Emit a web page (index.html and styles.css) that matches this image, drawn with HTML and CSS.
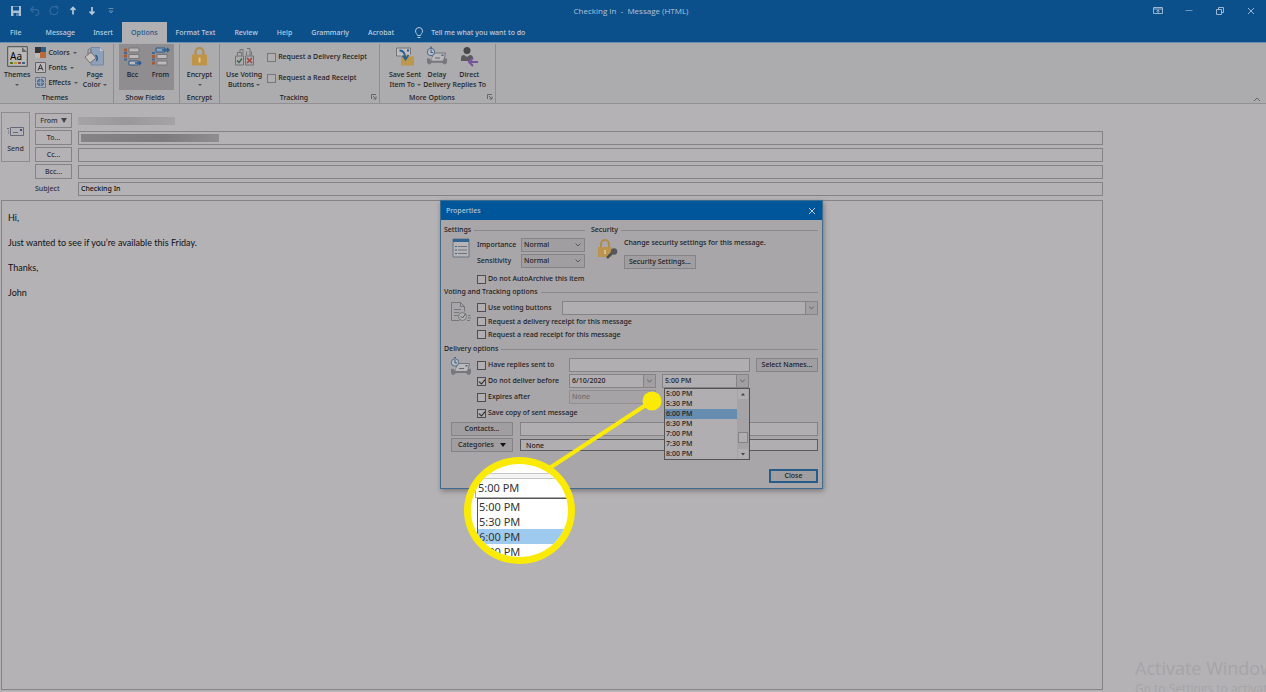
FILE: index.html
```html
<!DOCTYPE html>
<html lang="en">
<head>
<meta charset="utf-8">
<title>Checking In - Message (HTML)</title>
<link rel="stylesheet" href="styles.css">
</head>
<body>
<header class="titlebar">
  <div class="quick">
    <button aria-label="Save"><svg width="12" height="12" viewBox="0 0 12 12"><path d="M1 1h10v10H1z" fill="#a9c0d5"/><path d="M3 1.500h6v4H3zM3.500 8h5v3h-5z" fill="#0d4f8b"/><path d="M6.500 8.500h1V11h-1z" fill="#a9c0d5"/></svg></button>
    <button aria-label="Undo"><svg width="12" height="12" viewBox="0 0 12 12" fill="none" stroke="#2f689b" stroke-width="1.300"><path d="M4.500 1.500l-3 3 3 3M1.500 4.500h5c5 0 4 6 0 6"/></svg></button>
    <button aria-label="Redo"><svg width="12" height="12" viewBox="0 0 12 12" fill="none" stroke="#2f689b" stroke-width="1.300"><path d="M8.500 2.500A4 4 0 1 0 10 6M6.500 1.500h3v3"/></svg></button>
    <button aria-label="Previous item"><svg width="12" height="12" viewBox="0 0 12 12" fill="none" stroke="#b6c8da" stroke-width="1.700"><path d="M6 9.500V2.500M3.500 5L6 2.500 8.500 5"/></svg></button>
    <button aria-label="Next item"><svg width="12" height="12" viewBox="0 0 12 12" fill="none" stroke="#b6c8da" stroke-width="1.700"><path d="M6 2v7M3.500 6.500L6 9l2.500-2.500"/></svg></button>
    <button aria-label="Customize toolbar"><svg width="12" height="12" viewBox="0 0 12 12" fill="none" stroke="#5d88b0"><path d="M3.500 3.500h5M4 6l2 2 2-2z"/></svg></button>
  </div>
  <h1 class="title">Checking In&nbsp; - &nbsp;Message (HTML)</h1>
  <div class="window-buttons">
    <button aria-label="Ribbon display options"><svg width="10" height="10" viewBox="0 0 10 10" fill="none" stroke="#9db6cf"><path d="M.5 1.500h9v6h-9zM.5 3h9M5 7V4M3.500 5.500L5 4l1.500 1.500"/></svg></button>
    <button aria-label="Minimize"><svg width="10" height="10" viewBox="0 0 10 10" stroke="#6d93b8"><path d="M1.500 4.500h7"/></svg></button>
    <button aria-label="Restore"><svg width="10" height="10" viewBox="0 0 10 10" fill="none" stroke="#9db6cf"><path d="M1.500 3.500h5v5h-5zM3.500 3V1.500h5v5H7"/></svg></button>
    <button aria-label="Close window"><svg width="10" height="10" viewBox="0 0 10 10" stroke="#9db6cf"><path d="M2 2l6 6M8 2L2 8"/></svg></button>
  </div>
</header>
<nav class="tabs">
  <a href="#" class="file">File</a><a href="#">Message</a><a href="#">Insert</a><a href="#" class="active">Options</a><a href="#">Format Text</a><a href="#">Review</a><a href="#">Help</a><a href="#">Grammarly</a><a href="#">Acrobat</a>
  <a href="#" class="tell"><svg width="10" height="12" viewBox="0 0 10 12" fill="none" stroke="#b6c8da"><path d="M3.500 8.500C3.500 7 1.500 6.500 1.500 4a3.500 3.500 0 0 1 7 0c0 2.500-2 3-2 4.500zM3.500 10.500h3"/></svg>Tell me what you want to do</a>
</nav>

<section class="ribbon">
  <div class="group g-themes">
    <div class="tools">
      <button class="big"><svg width="21" height="21" viewBox="0 0 21 21"><path d="M.7.700h19.600v19.600H.700z" fill="#bab9b9" stroke="#4c4c4c"/><path d="M15 1v5h5z" fill="#686868"/><text x="3" y="14" class="aa">Aa</text><path d="M3 17h3" stroke="#58791e" stroke-width="2"/><path d="M7 17h3" stroke="#b69b40" stroke-width="2"/><path d="M11 17h3" stroke="#8c5045" stroke-width="2"/><path d="M15 17h3" stroke="#3f6188" stroke-width="2"/></svg><span>Themes</span><i class="arrow"></i></button>
      <div class="stack">
        <button><svg width="11" height="11" viewBox="0 0 11 11"><path d="M0 0h6v6H0z" fill="#343436"/><path d="M6 0h5v6H6z" fill="#286090"/><path d="M0 6h6v5H0z" fill="#bcb9b9"/><path d="M5 5h6v6H5z" fill="#bb693c"/></svg>Colors<i class="arrow"></i></button>
        <button><svg width="11" height="11" viewBox="0 0 11 11"><path d="M.5.500h10v10H.500z" fill="#bbb9bb" stroke="#666"/><path d="M3 8.500l2.500-6 2.500 6M4 6.500h3" fill="none" stroke="#333"/></svg>Fonts<i class="arrow"></i></button>
        <button><svg width="11" height="11" viewBox="0 0 11 11"><path d="M.5.500h10v10H.500z" fill="#a7abb5" stroke="#6c7890"/><circle cx="5.500" cy="5.500" r="3.200" fill="#69829f" stroke="#3f628b"/><path d="M5.500 0v11M0 5.500h11" stroke="#a6b1bf" stroke-width=".6"/></svg>Effects<i class="arrow"></i></button>
      </div>
      <button class="big"><svg width="21" height="21" viewBox="0 0 21 21"><path d="M7 1.500h9l3.500 3.500v14H7z" fill="#8fa0ba" stroke="#7388a6"/><path d="M16 1.500V5h3.500" fill="#c0c5ce"/><path d="M1 11l6-5 5 6-6 5z" fill="#c7c2bf" stroke="#77716f"/><path d="M4 9V4q2-3 3 0v4" fill="none" stroke="#777"/><path d="M11.500 9q3 2 1 6" fill="none" stroke="#295985" stroke-width="1.500"/></svg><span>Page<br>Color<i class="arrow"></i></span></button>
    </div>
    <div class="caption">Themes</div>
  </div>
  <div class="group g-fields">
    <div class="tools pressed">
      <button class="big"><svg width="21" height="20" viewBox="0 0 21 20"><path d="M7 1.500h10v4H7zM7 8h10v4H7z" fill="#bcbabc" stroke="#777"/><path d="M2 3.500h3M2 9.500h3" stroke="#a65a35" stroke-width="3"/><path d="M2 6.500h3M2 13h3" stroke="#426b94" stroke-width="2"/><path d="M7 14.500h9v4H7z" fill="#bcbabc" stroke="#295a91"/><path d="M13 16.500h6m-2-2l2 2-2 2" fill="none" stroke="#295a91" stroke-width="1.300"/></svg><span>Bcc</span></button>
      <button class="big"><svg width="21" height="20" viewBox="0 0 21 20"><path d="M7 8h10v4H7zM7 14.500h10v4H7z" fill="#bcbabc" stroke="#777"/><path d="M2 10h3M2 16.500h3" stroke="#a65a35" stroke-width="3"/><path d="M2 6.500h3M2 13h3" stroke="#426b94" stroke-width="2"/><path d="M6 1.500h9v4H6z" fill="#8fa4bb" stroke="#295a91"/><path d="M12 3.500h7m-2-2l2 2-2 2" fill="none" stroke="#295a91" stroke-width="1.300"/></svg><span>From</span></button>
    </div>
    <div class="caption">Show Fields</div>
  </div>
  <div class="group g-encrypt">
    <div class="tools">
      <button class="big"><svg width="17" height="20" viewBox="0 0 17 20"><path d="M4.500 9V5.500a4 4 0 0 1 8 0V9" fill="none" stroke="#b28c4c" stroke-width="2.200"/><rect x="1" y="8" width="15" height="11" rx="1" fill="#bf9448"/><path d="M8.500 11v5" stroke="#e0c489" stroke-width="2"/></svg><span>Encrypt</span><i class="arrow"></i></button>
    </div>
    <div class="caption">Encrypt</div>
  </div>
  <div class="group g-tracking">
    <div class="tools">
      <button class="big"><svg width="21" height="20" viewBox="0 0 21 20" fill="none"><path d="M1.500 9.500h8v9h-8zM11.500 9.500h8v9h-8zM3.500 9V6h4v3M6 6V3h3v6M12.500 9V5M13 2h3v7M17.500 5v4" stroke="#737173"/><path d="M3 14l2 2 3-4" stroke="#3b6345" stroke-width="1.300"/><path d="M13 11.500l5 5m0-5l-5 5" stroke="#a1493e" stroke-width="1.700"/></svg><span>Use Voting<br>Buttons<i class="arrow"></i></span></button>
      <div class="checks">
        <label><input type="checkbox">Request a Delivery Receipt</label>
        <label><input type="checkbox">Request a Read Receipt</label>
      </div>
    </div>
    <div class="caption">Tracking<svg class="launch" width="6" height="6" viewBox="0 0 6 6" fill="none" stroke="#666"><path d="M.5 5V.500H5M2 2l3 3M5 2.500V5H2.500"/></svg></div>
  </div>
  <div class="group g-more">
    <div class="tools">
      <button class="big"><svg width="20" height="20" viewBox="0 0 20 20"><path d="M6 10V8h6l1 2h6v9H6z" fill="#bc984f"/><path d="M6 9.500H1.500v-8h14V8" fill="#bebdc1" stroke="#747577"/><path d="M12 3h2v2h-2z" fill="#35547f"/><path d="M4.500 4q5.500 0 6 8M7.500 9l3 4 3-4.500" fill="none" stroke="#285f93" stroke-width="1.800"/></svg><span>Save Sent<br>Item To<i class="arrow"></i></span></button>
      <button class="big"><svg width="22" height="20" viewBox="0 0 22 20"><use href="#delay"/></svg><span>Delay<br>Delivery</span></button>
      <button class="big"><svg width="20" height="21" viewBox="0 0 20 21"><circle cx="8" cy="4.500" r="3.500" fill="#484648"/><path d="M2 15v-3q0-3 3-3l3 2 3-2q3 0 3 3l-4 3z" fill="#5b595b"/><path d="M19 16h-9m4-4l-4 4 4 4" fill="none" stroke="#77529a" stroke-width="2"/></svg><span>Direct<br>Replies To</span></button>
    </div>
    <div class="caption">More Options<svg class="launch" width="6" height="6" viewBox="0 0 6 6" fill="none" stroke="#666"><path d="M.5 5V.500H5M2 2l3 3M5 2.500V5H2.500"/></svg></div>
  </div>
  <button class="collapse" aria-label="Collapse ribbon"><svg width="8" height="6" viewBox="0 0 8 6" fill="none" stroke="#666"><path d="M1 5l3-3 3 3"/></svg></button>
</section>

<main class="message">
  <form class="headers">
    <button type="button" class="send"><svg width="19" height="11" viewBox="0 0 19 11" fill="none" stroke="#646a78"><path d="M4.500 1.500h13v8h-13zM1 2.500h2M2 5h1M2 7h1M7 6.500h5"/><path d="M14 3h2v2h-2z" fill="#35547f" stroke="none"/></svg>Send</button>
    <div class="rows">
      <div class="row"><button type="button">From <svg width="6" height="5" viewBox="0 0 6 5"><path d="M0 0h6L3 5z" fill="#444"/></svg></button><span class="blur short"></span></div>
      <div class="row"><button type="button">To...</button><div class="field"><span class="blur long"></span></div></div>
      <div class="row"><button type="button">Cc...</button><input class="field" aria-label="Cc"></div>
      <div class="row"><button type="button">Bcc...</button><input class="field" aria-label="Bcc"></div>
      <div class="row"><label for="subject">Subject</label><input class="field" id="subject" value="Checking In"></div>
    </div>
  </form>
  <article class="mail"><p>Hi,</p><p>Just wanted to see if you’re available this Friday.</p><p>Thanks,</p><p>John</p></article>
</main>

<div class="watermark"><div class="big-line">Activate Windows</div><div>Go to Settings to activate Windows.</div></div>

<section class="dialog" role="dialog" aria-labelledby="dlg-title">
  <header class="dlg-bar"><h2 id="dlg-title">Properties</h2><button aria-label="Close dialog"><svg width="8" height="8" viewBox="0 0 8 8" stroke="#bccbd9"><path d="M1 1l6 6M7 1L1 7"/></svg></button></header>
  <form class="dlg-body">
    <div class="top">
      <div class="settings">
        <h3>Settings</h3>
        <div class="pair">
          <svg width="18" height="20" viewBox="0 0 18 20"><path d="M1 1h16v18H1z" fill="#b5b4b7" stroke="#697582"/><path d="M1 1h16v3H1z" fill="#326492"/><path d="M3 8.500h2M3 12h2M3 15.500h2" stroke="#326492"/><path d="M6 8.500h9M6 12h9M6 15.500h9" stroke="#717277"/></svg>
          <div class="set-rows">
            <div class="set-row"><label for="imp">Importance</label><span class="combo gray"><select id="imp"><option>Normal</option></select><svg width="8" height="6" viewBox="0 0 8 6"><use href="#chev"/></svg></span></div>
            <div class="set-row"><label for="sens">Sensitivity</label><span class="combo gray"><select id="sens"><option>Normal</option></select><svg width="8" height="6" viewBox="0 0 8 6"><use href="#chev"/></svg></span></div>
            <label class="check archive"><input type="checkbox">Do not AutoArchive this item</label>
          </div>
        </div>
      </div>
      <div class="security">
        <h3>Security</h3>
        <div class="pair">
          <svg width="21" height="22" viewBox="0 0 21 22"><path d="M4 10V6a4 4 0 0 1 8 0v4" fill="none" stroke="#b08b4e" stroke-width="2"/><path d="M1 9h14v10H1z" fill="#bd944f"/><path d="M8 12v4" stroke="#d8bd8d" stroke-width="2"/><path d="M10 20l5-5" stroke="#4c4b50" stroke-width="2.500"/><circle cx="17" cy="13.500" r="3.200" fill="#57565b"/></svg>
          <div class="sec-text"><p>Change security settings for this message.</p><button type="button" class="btn">Security Settings...</button></div>
        </div>
      </div>
    </div>
    <h3>Voting and Tracking options</h3>
    <div class="pair voting">
      <svg width="21" height="22" viewBox="0 0 21 22" fill="none" stroke="#77777b"><path d="M1.500 1.500h9l4 4v5M1.500 1.500v18h8M10.500 1.500v4h4M4 8.500h7M4 11.500h5M4 14.500h4"/><circle cx="12.500" cy="15.500" r="4" fill="#b1b0b3"/><path d="M10.500 15l2 2 3-4" stroke="#506452"/><path d="M17 19.500h3M18 17h3M18 14.500h2.500"/></svg>
      <div class="vote-rows">
        <div class="vote-first"><label class="check"><input type="checkbox">Use voting buttons</label><span class="combo"><select aria-label="Voting buttons"><option></option></select><svg class="boxed" width="12" height="12" viewBox="-2 -3 12 12"><use href="#chev"/></svg></span></div>
        <label class="check"><input type="checkbox">Request a delivery receipt for this message</label>
        <label class="check"><input type="checkbox">Request a read receipt for this message</label>
      </div>
    </div>
    <h3>Delivery options</h3>
    <div class="pair delivery">
      <svg width="22" height="20" viewBox="0 0 22 20"><g id="delay"><path d="M7 6.500h12.500l-2 9H5.500z" fill="#b9b8bb" stroke="#77767a"/><path d="M1 12q3-1 4 2h12q1-3 4-2v3q0 3-3 3-1-2-3-2H7q-2 0-3 2-3 0-3-3z" fill="#77787c"/><path d="M5.500 14l1-3.500h11l-1 3.500z" fill="#b9b8bb"/><path d="M9 11.500h5" stroke="#66676c"/><path d="M15.500 8h2v1.500h-2z" fill="#54657b"/><circle cx="5" cy="5.500" r="3.700" fill="#b8bbc1" stroke="#516d8a"/><path d="M5 3v3h2M4 .700h2" fill="none" stroke="#3b5979"/></g></svg>
      <div class="del-rows">
        <div class="del-row"><label class="check"><input type="checkbox">Have replies sent to</label><input class="text" aria-label="Have replies sent to"><button type="button" class="btn names">Select Names...</button></div>
        <div class="del-row"><label class="check"><input type="checkbox" checked>Do not deliver before</label><span class="combo date"><select aria-label="Delivery date"><option>6/10/2020</option></select><svg class="boxed" width="12" height="12" viewBox="-2 -3 12 12"><use href="#chev"/></svg></span>
          <span class="combo time"><select aria-label="Delivery time"><option>5:00 PM</option></select><svg class="boxed" width="12" height="12" viewBox="-2 -3 12 12"><use href="#chev"/></svg>
            <div class="popup"><ul><li>5:00 PM</li><li>5:30 PM</li><li class="picked">6:00 PM</li><li>6:30 PM</li><li>7:00 PM</li><li>7:30 PM</li><li>8:00 PM</li></ul>
              <div class="scroll"><svg width="10" height="10" viewBox="0 0 10 10"><path d="M3 6.500h4L5 4z" fill="#444"/></svg><b></b><svg width="10" height="10" viewBox="0 0 10 10"><path d="M3 4h4L5 6.500z" fill="#444"/></svg></div></div>
          </span></div>
        <div class="del-row"><label class="check"><input type="checkbox">Expires after</label><span class="combo date off"><select disabled aria-label="Expiry date"><option>None</option></select></span></div>
        <div class="del-row"><label class="check"><input type="checkbox" checked>Save copy of sent message</label></div>
      </div>
    </div>
    <div class="wide-row"><button type="button" class="btn">Contacts...</button><input class="text" aria-label="Contacts"></div>
    <div class="wide-row"><button type="button" class="btn">Categories <svg width="6" height="4" viewBox="0 0 6 4"><path d="M0 0h6L3 4z" fill="#111"/></svg></button><input class="text dark" aria-label="Categories" value="None"></div>
    <div class="actions"><button type="button" class="btn close">Close</button></div>
  </form>
  <svg class="pointer" width="130" height="100" viewBox="0 0 130 100"><path d="M5 88L112 18" stroke="#fbea05" stroke-width="4"/><circle cx="112" cy="18" r="9.500" fill="#fbea05"/></svg>
  <div class="lens" aria-hidden="true"><div class="lens-edge"></div><div class="lens-value">5:00 PM</div><div class="lens-list"><div>5:00 PM</div><div>5:30 PM</div><div class="lens-picked">6:00 PM</div><div>6:30 PM</div></div></div>
</section>
<svg class="defs" aria-hidden="true"><defs><path id="chev" d="M1.500 1.500L4 4l2.500-2.500" fill="none" stroke="#59575a"/></defs></svg>
</body>
</html>
```
FILE: styles.css
```css
* { box-sizing: border-box; }
body {
  margin: 0;
  height: 100vh;
  overflow: hidden;
  position: relative;
  display: flex;
  flex-direction: column;
  background: #b4b2b5;
  color: #1c1b1d;
  font: 500 7px/10px "Noto Sans", "Open Sans", sans-serif;
}
h1, h2, h3, p, ul { margin: 0; padding: 0; font: inherit; list-style: none; }
button, input, select { font: inherit; color: inherit; margin: 0; padding: 0; border: 0; background: none; border-radius: 0; }
svg { display: block; flex: none; }
.defs { position: absolute; width: 0; height: 0; }

.titlebar { display: grid; grid-template-columns: 1fr auto 1fr; align-items: center; height: 22px; background: #0b4f8b; color: #b3c6d9; }
.title { font-family: "Open Sans", sans-serif; font-size: 8px; margin-right: 4px; }
.quick { display: flex; gap: 7px; padding-left: 10px; }
.window-buttons { display: flex; justify-content: flex-end; gap: 21px; padding-right: 10px; }
.tabs { display: flex; height: 21px; background: #0b4f8b; padding-left: 1px; border-bottom: 1px solid #6b8fb1; }
.tabs a { display: flex; align-items: center; padding: 1px 9px 0; color: #c0d0df; text-decoration: none; }
.tabs a:nth-child(n+5) { padding-right: 10px; }
.tabs .file { padding-right: 15px; }
.tabs .active { background: #b0afb1; color: #20588c; height: 21px; }
.tabs .tell { gap: 7px; padding-left: 10px; }

.ribbon { display: flex; height: 61px; background: #acabad; border-bottom: 1px solid #929093; padding: 1px 0 0; flex: none; }
.group { display: flex; flex-direction: column; justify-content: space-between; border-right: 1px solid #8f8d90; }
.g-themes { width: 114px; }
.g-fields { width: 66px; }
.g-encrypt { width: 40px; }
.g-tracking { width: 160px; }
.g-more { width: 116px; }
.tools { display: flex; justify-content: center; gap: 2px; height: 46px; padding-top: 2px; }
.g-themes .tools { justify-content: flex-start; padding-left: 4px; gap: 5px; }
.g-tracking .tools { justify-content: flex-start; padding-left: 6px; gap: 5px; }
.pressed { background: #8f8d90; margin: 0 5px; gap: 7px; }
.big { display: flex; flex-direction: column; align-items: center; justify-content: flex-start; gap: 3px; white-space: nowrap; height: 46px; }
.big svg { height: 21px; }
.aa { font-size: 10px; font-weight: 400; }
.arrow { display: inline-block; border: 2px solid transparent; border-top-color: #555; border-bottom: 0; margin-left: 2px; vertical-align: middle; }
.big > .arrow { margin: 1px 0 0; }
.stack { display: flex; flex-direction: column; gap: 4px; padding-top: 1px; }
.stack button { display: flex; align-items: center; gap: 2px; height: 11px; }
.stack .arrow { margin: 0 0 0 1px; }
.caption { display: flex; justify-content: center; position: relative; height: 10px; padding-right: 3px; }
.g-encrypt .caption { padding-right: 0; }
.g-tracking .caption, .g-more .caption { padding-right: 11px; }
.launch { position: absolute; right: 2px; top: 1px; }
.checks { display: flex; flex-direction: column; gap: 11px; padding-top: 6px; }
.checks label, .check { display: flex; align-items: center; gap: 2px; white-space: nowrap; }
input[type="checkbox"] { appearance: none; width: 9px; height: 9px; border: 1px solid #4f4d50; background: #b0aeb1; display: block; flex: none; position: relative; }
.checks input[type="checkbox"] { border-color: #777578; }
input[type="checkbox"]:checked::after { content: ""; position: absolute; left: 2px; top: 0; width: 3px; height: 5px; border: solid #222; border-width: 0 1px 1px 0; transform: rotate(40deg); }
.collapse { margin: auto 5px 1px auto; }

.message { flex: 1; display: flex; flex-direction: column; margin: 8px 163px 2px 1px; gap: 3px; min-height: 0; }
.headers { display: flex; gap: 5px; }
.send { width: 29px; height: 50px; border: 1px solid #8e8c8f; display: flex; flex-direction: column; align-items: center; justify-content: center; gap: 7px; padding-top: 6px; color: #333; }
.rows { flex: 1; }
.row { display: flex; height: 17px; align-items: center; gap: 6px; color: #333135; }
.row button, .row label { width: 37px; height: 15px; display: flex; justify-content: center; align-items: center; gap: 3px; }
.row button { border: 1px solid #858386; }
.row label { justify-content: flex-start; }
.field { flex: 1; height: 14px; border: 1px solid #858386; padding: 0 2px; display: flex; align-items: center; color: #111; min-width: 0; }
.blur { height: 8px; background: linear-gradient(90deg, #a5a3a6, #9a989b, #a5a3a6); }
.short { width: 97px; }
.long { width: 138px; background: linear-gradient(90deg, #858386, #7d7b7e 60%, #8f8d90); }
.mail { flex: 1; border: 1px solid #858386; padding: 10px 6px; font: 9px/13px Lato, "Open Sans", sans-serif; color: #111012; }
.mail p + p { margin-top: 12px; }

.watermark { position: absolute; left: calc(100% - 131px); top: calc(100% - 36px); width: 131px; overflow: hidden; color: #a6a4a7; font-family: "Open Sans", sans-serif; font-size: 12px; font-weight: 400; line-height: 18px; white-space: nowrap; height: 36px; }
.big-line { font-size: 18px; line-height: 24px; }

.dialog { position: absolute; left: calc(50% - 193px); top: 200px; width: 383px; background: #a8a6a9; border: 1px solid #3e6c8e; box-shadow: 1px 2px 5px #7b797c; }
.dlg-bar { height: 19px; background: #00569b; color: #b2c7da; display: flex; justify-content: space-between; align-items: center; padding: 0 6px 0 5px; }
.dlg-body { padding: 4px 4px 5px 3px; }
.dlg-body h3 { display: flex; align-items: center; gap: 3px; height: 12px; white-space: nowrap; }
.dlg-body h3::after { content: ""; flex: 1; height: 1px; background: #8a888b; }
.top { display: flex; gap: 6px; height: 62px; }
.settings { width: 141px; }
.security { flex: 1; }
.pair { display: flex; padding-left: 6px; gap: 6px; }
.top .pair { padding-top: 2px; }
.settings .pair { padding-left: 8px; gap: 7px; }
.set-rows { flex: 1; display: flex; flex-direction: column; gap: 2px; }
.set-row { display: flex; justify-content: space-between; align-items: center; }
.archive { margin-top: 4px; }
.combo { position: relative; display: flex; align-items: center; height: 14px; border: 1px solid #858386; background: #b0aeb1; }
.combo select { appearance: none; width: 100%; height: 12px; padding-left: 2px; opacity: 1; }
.combo > svg { position: absolute; right: 2px; top: 3px; pointer-events: none; }
.combo > .boxed { right: 0; top: 0; background: #a19fa2; border-left: 1px solid #858386; }
.gray { width: 64px; background: #a09ea1; }
.sec-text p { margin-bottom: 7px; white-space: nowrap; }
.btn { border: 1px solid #858386; background: #a09ea1; height: 14px; line-height: 12px; padding: 0 4px; white-space: nowrap; }
.voting { height: 45px; padding-top: 3px; gap: 6px; }
.vote-rows { flex: 1; display: flex; flex-direction: column; }
.vote-rows .check { height: 13px; }
.vote-first { display: flex; justify-content: space-between; }
.vote-first .combo { width: 256px; }
.delivery { padding-top: 2px; gap: 5px; }
.del-rows { flex: 1; }
.del-row { display: flex; align-items: center; height: 16px; }
.del-row .check { width: 92px; }
.text { height: 14px; border: 1px solid #858386; background: #b0aeb1; min-width: 0; }
.del-row .text { width: 181px; }
.names { margin-left: 6px; flex: 1; }
.date { width: 87px; }
.time { width: 87px; margin-left: 6px; }
.off { background: #a5a3a6; color: #706e71; border-color: #929093; }
.popup { position: absolute; left: 1px; top: 13px; width: 86px; height: 72px; display: flex; background: #b0aeb1; border: 1px solid #545255; z-index: 2; }
.popup ul { flex: 1; line-height: 10px; }
.popup li { padding-left: 1px; }
.picked { background: #668caf; }
.scroll { width: 12px; display: flex; flex-direction: column; align-items: center; background: #a5a3a6; }
.scroll svg { background: #b0aeb1; }
.scroll b { width: 10px; height: 11px; border: 1px solid #858386; background: #b0aeb1; margin: auto 0 6px; }
.wide-row { display: flex; align-items: center; height: 16px; gap: 7px; padding-left: 7px; }
.wide-row .btn { width: 62px; display: flex; justify-content: center; align-items: center; gap: 6px; }
.wide-row .text { flex: 1; }
.wide-row .dark { border-color: #5d5b5e; height: 12px; padding-left: 5px; }
.actions { display: flex; justify-content: flex-end; margin-top: 16px; }
.close { width: 49px; border: 2px solid #265d88; line-height: 10px; }

.pointer { position: absolute; left: 99px; top: 182px; z-index: 3; }
.lens { position: absolute; left: 23px; top: 256px; width: 111px; height: 107px; border: 7px solid #fbea05; border-radius: 50%; background: #fff; overflow: hidden; z-index: 4; color: #333; font-size: 11px; font-weight: 400; line-height: 15px; padding-top: 9px; }
.lens-edge { height: 6px; border: solid #c5c5c5; border-width: 1px 0; background: #f4f4f4; }
.lens-value { margin-left: 4px; padding-left: 2px; height: 19px; border: solid #aaa; border-width: 0 0 1px 1px; line-height: 18px; }
.lens-list { margin-left: 6px; border: solid #555; border-width: 1px 0 0 1px; }
.lens-list div { padding-left: 1px; }
.lens-picked { background: #9fcaf0; }
```
